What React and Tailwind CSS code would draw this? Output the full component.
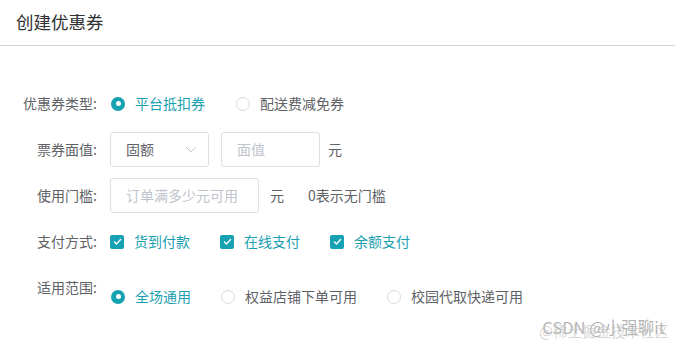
const font = { fontFamily: '"Noto Sans CJK SC", "Noto Sans", sans-serif' };

function Radio({ checked, children }) {
    return (
        <div className="flex items-center gap-[10px]">
            {checked ? (
                <span className="w-[14px] h-[14px] rounded-full bg-[#16a2b2] flex items-center justify-center">
                    <span className="w-[5px] h-[5px] rounded-full bg-white" />
                </span>
            ) : (
                <span className="w-[14px] h-[14px] rounded-full border border-[#d8dbe0] bg-white" />
            )}
            <span className={checked ? 'text-[#1a9fb0]' : 'text-[#606266]'}>{children}</span>
        </div>
    );
}

function Checkbox({ children }) {
    return (
        <div className="flex items-center gap-[10px]">
            <span className="w-[14px] h-[14px] rounded-[2px] bg-[#16a2b2] flex items-center justify-center">
                <svg width="9" height="7" viewBox="0 0 9 7" fill="none">
                    <path d="M1 3.5L3.5 6L8 1" stroke="white" strokeWidth="1.3" />
                </svg>
            </span>
            <span className="text-[#1a9fb0]">{children}</span>
        </div>
    );
}

function Label({ children }) {
    return <div className="w-[97px] shrink-0 text-right text-[#606266]">{children}</div>;
}

export default function App() {
    return (
        <div className="relative w-[675px] h-[345px] bg-white overflow-hidden text-[14px]" style={font}>
            {/* Header */}
            <div className="h-[46px] border-b border-[#d4d4d4] flex items-center px-4">
                <h1 className="text-[17.5px] text-[#303133] pb-[1px]">创建优惠券</h1>
            </div>

            {/* Form */}
            <div className="flex flex-col gap-[11px] pt-[40px]">
                <div className="flex items-center h-[35px]">
                    <Label>优惠券类型:</Label>
                    <div className="flex items-center gap-[31px] ml-[14px]">
                        <Radio checked>平台抵扣券</Radio>
                        <Radio>配送费减免券</Radio>
                    </div>
                </div>

                <div className="flex items-center h-[35px]">
                    <Label>票券面值:</Label>
                    <div className="flex items-center ml-[13px]">
                        <div className="w-[99px] h-[35px] border border-[#dcdfe6] rounded-[3px] flex items-center justify-between pl-[15px] pr-[11px] text-[#606266]">
                            <span>固额</span>
                            <svg width="12" height="7" viewBox="0 0 12 7" fill="none">
                                <path d="M1 1L6 6L11 1" stroke="#c0c4cc" strokeWidth="1" />
                            </svg>
                        </div>
                        <div className="w-[99px] h-[35px] ml-[12px] border border-[#dcdfe6] rounded-[3px] flex items-center pl-[15px] text-[#c0c4cc]">
                            面值
                        </div>
                        <span className="ml-[8px] text-[#606266]">元</span>
                    </div>
                </div>

                <div className="flex items-center h-[35px]">
                    <Label>使用门槛:</Label>
                    <div className="flex items-center ml-[13px]">
                        <div className="w-[149px] h-[35px] border border-[#dcdfe6] rounded-[3px] flex items-center pl-[15px] text-[#c0c4cc]">
                            订单满多少元可用
                        </div>
                        <span className="ml-[11px] text-[#606266]">元</span>
                        <span className="ml-[24px] text-[#606266]">0表示无门槛</span>
                    </div>
                </div>

                <div className="flex items-center h-[35px]">
                    <Label>支付方式:</Label>
                    <div className="flex items-center gap-[30px] ml-[13px]">
                        <Checkbox>货到付款</Checkbox>
                        <Checkbox>在线支付</Checkbox>
                        <Checkbox>余额支付</Checkbox>
                    </div>
                </div>

                <div className="flex items-start">
                    <div className="h-[35px] flex items-center">
                        <Label>适用范围:</Label>
                    </div>
                    <div className="flex items-center gap-[30px] ml-[14px] h-[35px] mt-[9px]">
                        <Radio checked>全场通用</Radio>
                        <Radio>权益店铺下单可用</Radio>
                        <Radio>校园代取快递可用</Radio>
                    </div>
                </div>
            </div>

            {/* Watermark */}
            <div className="absolute right-[10px] bottom-[10px] text-[16.5px] text-[#9a9a9a]/75 leading-none whitespace-nowrap">
                <div className="relative">
                    <span className="block">CSDN @小强聊it</span>
                    <span className="absolute right-[-4px] top-[5px] text-[14.5px] text-[#c4c4c4]/70">@稀土掘金技术社区</span>
                </div>
            </div>
        </div>
    );
}
